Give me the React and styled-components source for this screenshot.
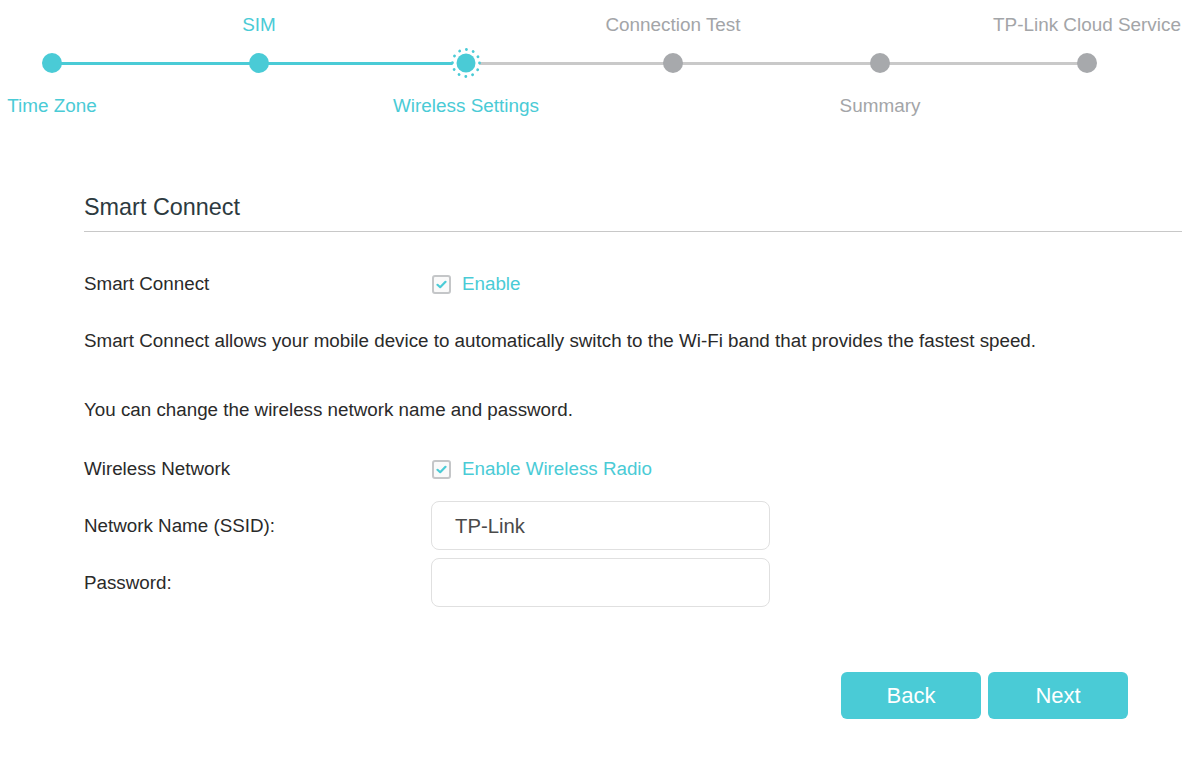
import React from "react";
import styled, { createGlobalStyle } from "styled-components";

const TEAL = "#4acbd6";
const GREY_DOT = "#a7a9ac";
const GREY_LINE = "#c9c9c9";
const GREY_TEXT = "#a3a5a8";

const Global = createGlobalStyle`
  html, body { margin: 0; padding: 0; background: #fff; }
  body { font-family: "Liberation Sans", Arial, Helvetica, sans-serif; color: #333; }
  * { box-sizing: border-box; }
`;

const Page = styled.div`
  width: 1200px;
  height: 765px;
  overflow: hidden;
  background: #fff;
`;

const Stepper = styled.div`
  display: grid;
  grid-template-columns: repeat(6, 207px);
  margin-left: -51.5px;
`;

const Step = styled.div`
  display: grid;
  grid-template-rows: 50px 26px 60px;
  justify-items: center;
  position: relative;
`;

const StepLabel = styled.div`
  font-size: 18.9px;
  line-height: 22px;
  white-space: nowrap;
  color: ${(p) => (p.$done ? TEAL : GREY_TEXT)};
  align-self: ${(p) => (p.$top ? "center" : "start")};
  padding-top: ${(p) => (p.$top ? "0" : "19px")};
`;

const DotCell = styled.div`
  position: relative;
  width: 100%;
  display: flex;
  align-items: center;
  justify-content: center;
  &::after {
    content: "";
    display: ${(p) => (p.$last ? "none" : "block")};
    position: absolute;
    left: 50%;
    width: 207px;
    top: 12px;
    height: 3px;
    background: ${(p) => (p.$lineDone ? TEAL : GREY_LINE)};
    z-index: 0;
  }
`;

const Dot = styled.span`
  position: relative;
  z-index: 1;
  width: 20px;
  height: 20px;
  border-radius: 50%;
  background: ${(p) => (p.$done ? TEAL : GREY_DOT)};
`;

const ActiveDot = styled.svg`
  position: relative;
  z-index: 1;
  display: block;
`;

const Content = styled.div`
  padding: 57px 18px 0 84px;
`;

const Heading = styled.div`
  font-size: 23.4px;
  line-height: 28px;
  color: #2d3a40;
  padding-bottom: 10px;
  border-bottom: 1px solid #c8c8c8;
`;

const Row = styled.div`
  display: grid;
  grid-template-columns: 347px 1fr;
  align-items: center;
  min-height: ${(p) => p.$h || 24}px;
  margin-top: ${(p) => p.$mt}px;
  font-size: 18.8px;
  line-height: 24px;
  color: #2a2a2a;
`;

const Text = styled.p`
  margin: ${(p) => p.$mt}px 0 0;
  font-size: 18.8px;
  line-height: 24px;
  color: #2a2a2a;
`;

const Check = styled.label`
  display: inline-flex;
  align-items: center;
  gap: 11px;
  color: ${TEAL};
  font-size: 18.8px;
  padding-left: 1px;
`;

const Box = styled.span`
  width: 19px;
  height: 19px;
  border: 2px solid #c4c6c8;
  border-radius: 3px;
  display: flex;
  align-items: center;
  justify-content: center;
  background: #fafafa;
`;

const Input = styled.div`
  width: 339px;
  height: 49px;
  border: 1.5px solid #e0e0e0;
  border-radius: 8px;
  padding-left: 23px;
  display: flex;
  align-items: center;
  font-size: 20.3px;
  color: #4a4a4a;
`;

const Buttons = styled.div`
  display: flex;
  justify-content: flex-end;
  gap: 7px;
  margin-top: 65px;
  padding-right: 54px;
`;

const Button = styled.button`
  width: 140px;
  height: 47px;
  border: none;
  border-radius: 6px;
  background: ${TEAL};
  color: #fff;
  font-family: "Liberation Sans", Arial, sans-serif;
  font-size: 22px;
  cursor: pointer;
`;

const steps = [
  { label: "Time Zone", top: false },
  { label: "SIM", top: true },
  { label: "Wireless Settings", top: false },
  { label: "Connection Test", top: true },
  { label: "Summary", top: false },
  { label: "TP-Link Cloud Service", top: true },
];
const ACTIVE = 2;

function CheckBox({ children }) {
  return (
    <Check>
      <Box>
        <svg width="11" height="9" viewBox="0 0 11 9">
          <path d="M1.5 4.8 L4.2 7.2 L9.5 1.8" fill="none" stroke={TEAL} strokeWidth="2.2" strokeLinecap="round" strokeLinejoin="round" />
        </svg>
      </Box>
      {children}
    </Check>
  );
}

export default function App() {
  return (
    <Page>
      <Global />
      <Stepper>
        {steps.map((s, i) => {
          const done = i <= ACTIVE;
          return (
            <Step key={s.label}>
              <StepLabel $top $done={done}>{s.top ? s.label : ""}</StepLabel>
              <DotCell $last={i === steps.length - 1} $lineDone={i < ACTIVE}>
                {i === ACTIVE ? (
                  <ActiveDot width="32" height="32" viewBox="0 0 32 32">
                    <circle cx="16" cy="16" r="13.5" fill="#fff" stroke={TEAL} strokeWidth="2.8" strokeDasharray="0.1 6.97" strokeLinecap="round" />
                    <circle cx="16" cy="16" r="9.5" fill={TEAL} />
                  </ActiveDot>
                ) : (
                  <Dot $done={done} />
                )}
              </DotCell>
              <StepLabel $done={done}>{s.top ? "" : s.label}</StepLabel>
            </Step>
          );
        })}
      </Stepper>
      <Content>
        <Heading>Smart Connect</Heading>
        <Row $mt={40}>
          <span>Smart Connect</span>
          <CheckBox>Enable</CheckBox>
        </Row>
        <Text $mt={33}>
          Smart Connect allows your mobile device to automatically switch to the Wi-Fi band that provides the fastest speed.
        </Text>
        <Text $mt={45}>You can change the wireless network name and password.</Text>
        <Row $mt={35}>
          <span>Wireless Network</span>
          <CheckBox>Enable Wireless Radio</CheckBox>
        </Row>
        <Row $mt={20} $h={49}>
          <span>Network Name (SSID):</span>
          <Input>TP-Link</Input>
        </Row>
        <Row $mt={8} $h={49}>
          <span>Password:</span>
          <Input />
        </Row>
        <Buttons>
          <Button>Back</Button>
          <Button>Next</Button>
        </Buttons>
      </Content>
    </Page>
  );
}
